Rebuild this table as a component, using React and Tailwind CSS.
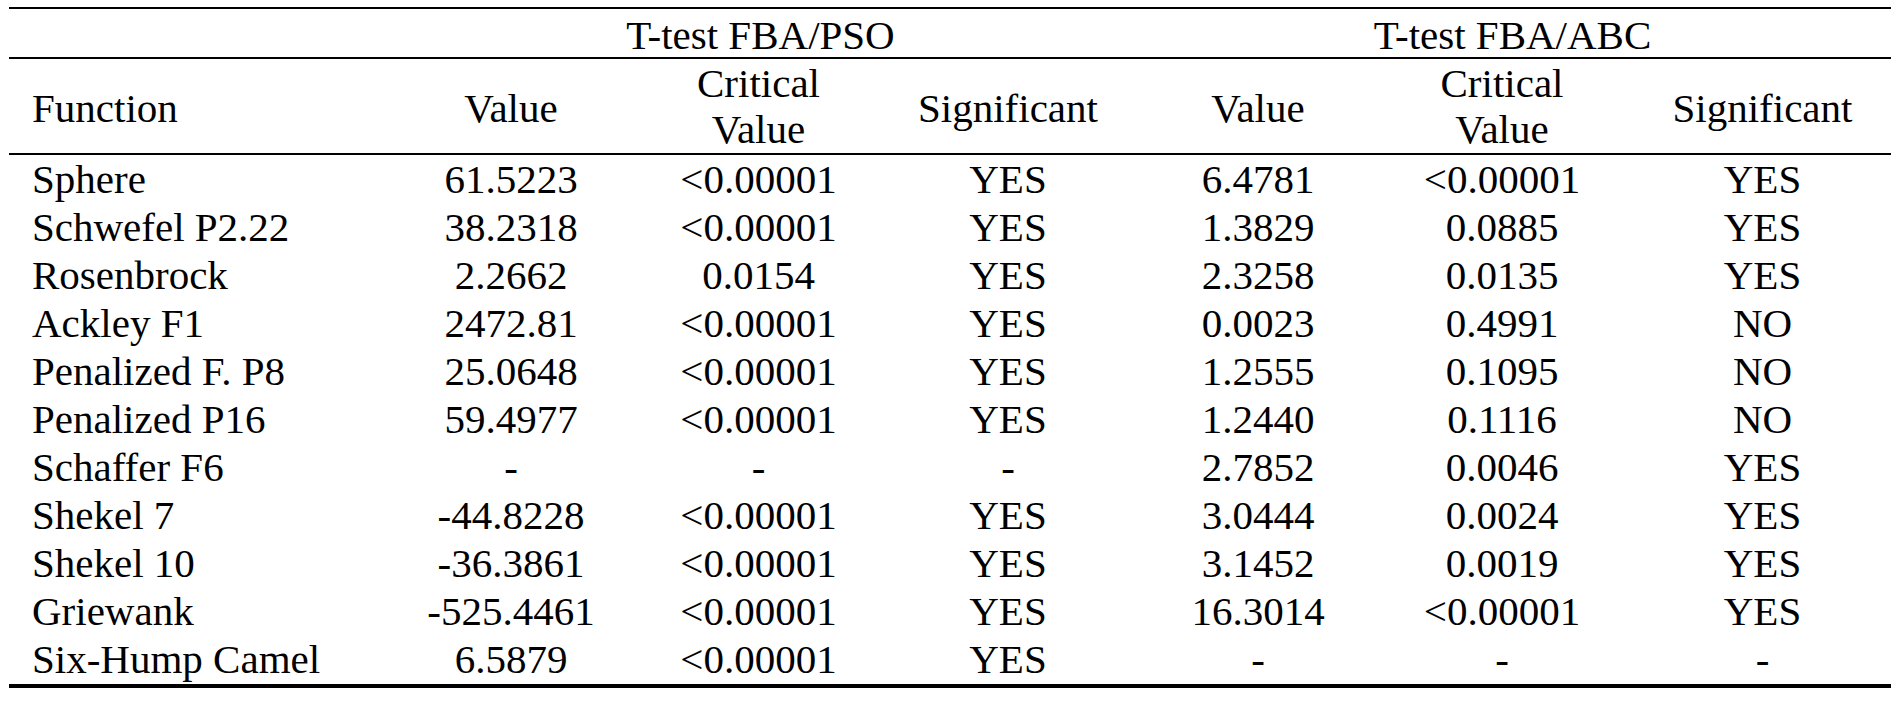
import React from "react";

const rows = [
  ["Sphere", "61.5223", "<0.00001", "YES", "6.4781", "<0.00001", "YES"],
  ["Schwefel P2.22", "38.2318", "<0.00001", "YES", "1.3829", "0.0885", "YES"],
  ["Rosenbrock", "2.2662", "0.0154", "YES", "2.3258", "0.0135", "YES"],
  ["Ackley F1", "2472.81", "<0.00001", "YES", "0.0023", "0.4991", "NO"],
  ["Penalized F. P8", "25.0648", "<0.00001", "YES", "1.2555", "0.1095", "NO"],
  ["Penalized P16", "59.4977", "<0.00001", "YES", "1.2440", "0.1116", "NO"],
  ["Schaffer F6", "-", "-", "-", "2.7852", "0.0046", "YES"],
  ["Shekel 7", "-44.8228", "<0.00001", "YES", "3.0444", "0.0024", "YES"],
  ["Shekel 10", "-36.3861", "<0.00001", "YES", "3.1452", "0.0019", "YES"],
  ["Griewank", "-525.4461", "<0.00001", "YES", "16.3014", "<0.00001", "YES"],
  ["Six-Hump Camel", "6.5879", "<0.00001", "YES", "-", "-", "-"],
];

const cols =
  "grid grid-cols-[378px_248px_247px_252px_248px_240px_269px] font-['Liberation_Serif']";
const cell = "text-center font-['Liberation_Serif'] text-[41px]";

export default function App() {
  return (
    <div className="w-[1900px] h-[701px] bg-white text-black pt-[7px] pl-[9px] text-[41px] leading-[48px] font-['Liberation_Serif']">
      <div className="w-[1882px] border-t-2 border-black font-['Liberation_Serif']">
        <div className="grid grid-cols-[378px_747px_757px] h-[50px] border-b-2 border-black pt-[2px] font-['Liberation_Serif']">
          <div />
          <div className={cell}>T-test FBA/PSO</div>
          <div className={cell}>T-test FBA/ABC</div>
        </div>
        <div className={`${cols} h-[96px] border-b-2 border-black items-center leading-[46px]`}>
          <div className="pl-[23px] pt-[4px] font-['Liberation_Serif'] text-[41px]">Function</div>
          <div className={`${cell} pt-[4px]`}>Value</div>
          <div className={cell}>
            Critical
            <br />
            Value
          </div>
          <div className={`${cell} pt-[4px]`}>Significant</div>
          <div className={`${cell} pt-[4px]`}>Value</div>
          <div className={cell}>
            Critical
            <br />
            Value
          </div>
          <div className={`${cell} pt-[4px] pl-[12px]`}>Significant</div>
        </div>
        <div className="border-b-4 border-black pb-[1px]">
          {rows.map((r) => (
            <div key={r[0]} className={`${cols} h-[48px]`}>
              <div className="pl-[23px] whitespace-nowrap font-['Liberation_Serif'] text-[41px]">{r[0]}</div>
              <div className={cell}>{r[1]}</div>
              <div className={cell}>{r[2]}</div>
              <div className={cell}>{r[3]}</div>
              <div className={cell}>{r[4]}</div>
              <div className={cell}>{r[5]}</div>
              <div className={`${cell} pl-[12px]`}>{r[6]}</div>
            </div>
          ))}
        </div>
      </div>
    </div>
  );
}
